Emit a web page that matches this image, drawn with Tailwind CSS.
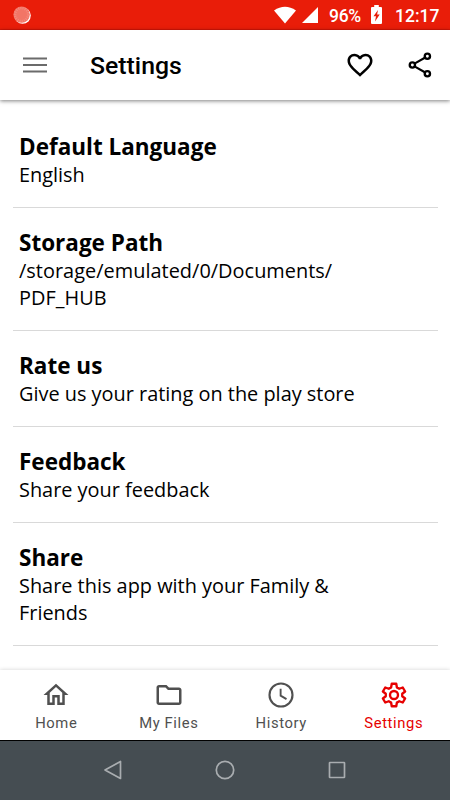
<!DOCTYPE html>
<html lang="en">
<head>
<meta charset="utf-8">
<title>Settings</title>
<script src="https://cdn.jsdelivr.net/npm/@tailwindcss/browser@4"></script>
</head>
<body class="bg-white font-['Roboto',sans-serif]">
<div class="w-[450px] h-[800px] flex flex-col overflow-hidden bg-white text-black">
  <div class="h-[30px] shrink-0 bg-[#e91d09] border-b border-[#d91507] flex items-center text-white pl-[13px] pr-[10px]">
    <svg class="size-[18px]" viewBox="0 0 18 18"><circle cx="9.600" cy="9.600" r="8.200" fill="#fff"/><circle cx="8.600" cy="8.600" r="8.200" fill="#f27566"/><circle cx="8.600" cy="8.600" r="6.500" fill="none" stroke="#f58a7d" stroke-width="2.400" stroke-dasharray="1 1.200"/></svg>
    <div class="ml-auto flex items-center">
      <svg class="w-[22px] h-[18px]" viewBox="0 0 22 18"><path d="M0 4.500Q11-3 22 4.500L11 17.500Z" fill="#fff"/></svg>
      <svg class="w-4 h-4 ml-[6px]" viewBox="0 0 16 16"><path d="M16 0V16H0Z" fill="#fff"/></svg>
      <span class="ml-[11px] w-[33px] text-[17.500px] leading-[30px] whitespace-nowrap pt-[2px] font-medium tracking-[-0.3px]">96%</span>
      <svg class="w-[11px] h-[19px] ml-[9px]" viewBox="0 0 11 19"><path d="M3.200 0h4.600v2H10q1 0 1 1v15q0 1-1 1H1q-1 0-1-1V3q0-1 1-1h2.200z" fill="#fff"/><path d="M7 5L2.500 11.200H5L4 16.500L8.700 9.500H6.100Z" fill="#e91d09"/></svg>
      <span class="ml-[13px] w-[45px] text-[17.500px] leading-[30px] whitespace-nowrap pt-[2px] font-medium">12:17</span>
    </div>
  </div>
  <header class="h-[70px] shrink-0 flex items-center bg-white pl-[23px] pr-[15px] shadow-[0_1px_4px_rgba(0,0,0,0.5)]">
    <svg class="w-6 h-4" viewBox="0 0 24 16"><path d="M0 1.500h24M0 8h24M0 14.500h24" stroke="#6b6b6b" stroke-width="2.200"/></svg>
    <h1 class="ml-[43px] text-[24.800px] font-medium leading-[30px] pt-[2px]">Settings</h1>
    <svg class="size-[30px] ml-auto" viewBox="0 0 24 24"><path d="M16.500 3c-1.740 0-3.410.810-4.500 2.090C10.910 3.810 9.240 3 7.500 3 4.420 3 2 5.420 2 8.500c0 3.780 3.400 6.860 8.550 11.540L12 21.350l1.450-1.320C18.600 15.360 22 12.280 22 8.500 22 5.420 19.580 3 16.500 3zm-4.400 15.550l-.1.100-.1-.1C7.140 14.240 4 11.390 4 8.500 4 6.500 5.500 5 7.500 5c1.540 0 3.040.990 3.570 2.360h1.870C13.460 5.990 14.960 5 16.500 5c2 0 3.500 1.500 3.500 3.500 0 2.890-3.140 5.740-7.900 10.050z"/></svg>
    <svg class="size-[30px] ml-[30px]" viewBox="0 0 24 24" fill="none" stroke="#000" stroke-width="1.900"><circle cx="5.900" cy="12" r="2.100"/><circle cx="17.900" cy="5" r="2.100"/><circle cx="17.900" cy="19" r="2.100"/><path d="M7.600 10.900L16.200 6M7.600 13.100L16.200 18" stroke-width="1.700"/></svg>
  </header>
  <main class="flex-1 min-h-0 pt-3 px-[12.500px] font-['Open_Sans',sans-serif]">
    <section class="pt-[20px] pb-[19px] pl-[6.500px] border-b border-[#d9d9d9]">
      <h2 class="text-[22.500px] leading-[30px] font-bold -mb-px">Default Language</h2>
      <p class="text-[19.900px] leading-[27px]">English</p>
    </section>
    <section class="pt-[20px] pb-[19px] pl-[6.500px] border-b border-[#d9d9d9]">
      <h2 class="text-[22.500px] leading-[30px] font-bold -mb-px">Storage Path</h2>
      <p class="text-[19.900px] leading-[27px] tracking-[0.03px]">/storage/emulated/0/Documents/<br>PDF_HUB</p>
    </section>
    <section class="pt-[20px] pb-[19px] pl-[6.500px] border-b border-[#d9d9d9]">
      <h2 class="text-[22.500px] leading-[30px] font-bold -mb-px">Rate us</h2>
      <p class="text-[19.900px] leading-[27px]">Give us your rating on the play store</p>
    </section>
    <section class="pt-[20px] pb-[19px] pl-[6.500px] border-b border-[#d9d9d9]">
      <h2 class="text-[22.500px] leading-[30px] font-bold -mb-px">Feedback</h2>
      <p class="text-[19.900px] leading-[27px]">Share your feedback</p>
    </section>
    <section class="pt-[20px] pb-[19px] pl-[6.500px] border-b border-[#d9d9d9]">
      <h2 class="text-[22.500px] leading-[30px] font-bold -mb-px">Share</h2>
      <p class="text-[19.900px] leading-[27px]">Share this app with your Family &amp;<br>Friends</p>
    </section>
  </main>
  <nav class="h-[71px] shrink-0 grid grid-cols-4 bg-white border-b border-black shadow-[0_0_4px_rgba(0,0,0,0.18)] text-[#505050] text-[14.800px] tracking-[0.6px]">
    <div class="flex flex-col items-center pt-[10px]"><svg class="size-[30px]" viewBox="0 0 24 24" fill="currentColor"><path d="M12 5.690l5 4.500V18h-2v-6H9v6H7v-7.810l5-4.500M12 3L2 12h3v8h6v-6h2v6h6v-8h3L12 3z"/></svg><span class="leading-5 mt-[3px]">Home</span></div>
    <div class="flex flex-col items-center pt-[10px]"><svg class="size-[30px]" viewBox="0 0 24 24" fill="currentColor"><path d="M9.170 6l2 2H20v10H4V6h5.170M10 4H4c-1.100 0-1.990.9-1.990 2L2 18c0 1.100.9 2 2 2h16c1.100 0 2-.9 2-2V8c0-1.100-.9-2-2-2h-8l-2-2z"/></svg><span class="leading-5 mt-[3px]">My Files</span></div>
    <div class="flex flex-col items-center pt-[10px]"><svg class="size-[30px]" viewBox="0 0 24 24" fill="none" stroke="currentColor"><circle cx="12" cy="12" r="9.200" stroke-width="1.700"/><path d="M11.700 7v5.500l4.700 2.800" stroke-width="1.500"/></svg><span class="leading-5 mt-[3px]">History</span></div>
    <div class="flex flex-col items-center pt-[10px] text-[#e60000]"><svg class="size-[30px]" viewBox="0 0 24 24" fill="none" stroke="currentColor" stroke-width="1.900" stroke-linejoin="round"><path d="M10.200 3h3.600l.5 2.900 1.900 1.100 2.800-1 1.900 3.200-2.300 1.800v2l2.300 1.800-1.900 3.200-2.800-1-1.900 1.100-.5 2.900h-3.600l-.5-2.900-1.900-1.100-2.800 1-1.900-3.200L5.400 13v-2L3.100 9.200 5 6l2.800 1 1.900-1.100z"/><circle cx="12" cy="12" r="3.200"/></svg><span class="leading-5 mt-[3px]">Settings</span></div>
  </nav>
  <div class="h-[59px] shrink-0 bg-[#454d52] flex items-center justify-center gap-[92px]">
    <svg class="size-5 -mt-px" viewBox="0 0 20 20" fill="none" stroke="#a9adb0" stroke-width="1.700" stroke-linejoin="round"><path d="M17.500 1.500V18.500L2 10Z"/></svg>
    <svg class="size-5 -mt-px" viewBox="0 0 20 20" fill="none" stroke="#a9adb0" stroke-width="1.700"><circle cx="10" cy="10" r="8.700"/></svg>
    <svg class="size-5 -mt-px" viewBox="0 0 20 20" fill="none" stroke="#a9adb0" stroke-width="1.700"><rect x="2.500" y="2.500" width="15" height="15" rx=".5"/></svg>
  </div>
</div>
</body>
</html>
